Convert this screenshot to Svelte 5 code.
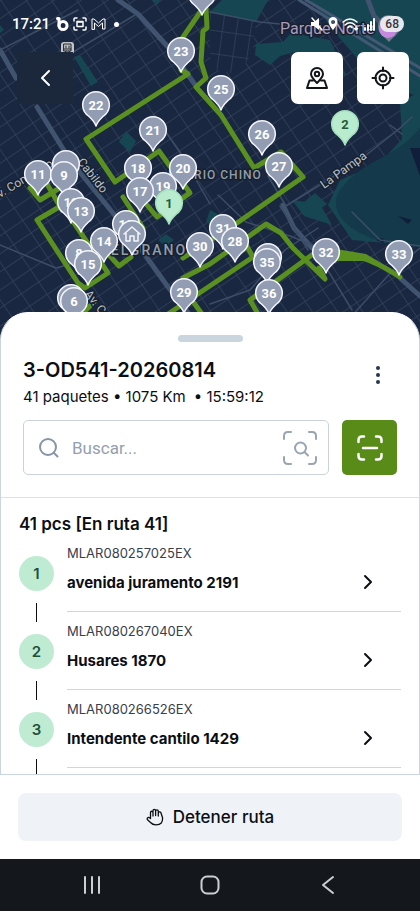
<script lang="ts">
	type Pin = { x: number; y: number; label?: string; done?: boolean; home?: boolean };

	const pins: Pin[] = [
		{ x: 202, y: -6 },
		{ x: 181, y: 51, label: '23' },
		{ x: 221, y: 89, label: '25' },
		{ x: 96, y: 105, label: '22' },
		{ x: 153, y: 130, label: '21' },
		{ x: 262, y: 134, label: '26' },
		{ x: 279, y: 166, label: '27' },
		{ x: 345, y: 124, label: '2', done: true },
		{ x: 66, y: 164 },
		{ x: 38, y: 174, label: '11' },
		{ x: 64, y: 175, label: '9' },
		{ x: 138, y: 168, label: '18' },
		{ x: 183, y: 168, label: '20' },
		{ x: 163, y: 186, label: '19' },
		{ x: 140, y: 191, label: '17' },
		{ x: 169, y: 203, label: '1', done: true },
		{ x: 71, y: 202, label: '12' },
		{ x: 81, y: 211, label: '13' },
		{ x: 79, y: 253, label: '8' },
		{ x: 104, y: 241, label: '14' },
		{ x: 88, y: 264, label: '15' },
		{ x: 126, y: 224, label: '10' },
		{ x: 132, y: 234, home: true },
		{ x: 71, y: 298 },
		{ x: 74, y: 301, label: '6' },
		{ x: 200, y: 246, label: '30' },
		{ x: 223, y: 228, label: '31' },
		{ x: 235, y: 241, label: '28' },
		{ x: 184, y: 292, label: '29' },
		{ x: 268, y: 257 },
		{ x: 267, y: 262, label: '35' },
		{ x: 326, y: 252, label: '32' },
		{ x: 399, y: 254, label: '33' },
		{ x: 269, y: 293, label: '36' }
	];

	const routes = [
		'M203 8 181 40V70L188 74 86 139 115 182 159 151 174 172',
		'M206 8 207 28 203 31 201 62 206 78 196 87 221 115 254 168 281 152 303 177 237 223 183 258',
		'M183 183 190 193 176 203M123 197 143 228M147 205 157 217 166 211',
		'M30 188 40 200 63 186M47 184 62 210M37 220 66 203M37 220 78 283 85 288 108 273 70 217M110 256 119 266 131 257',
		'M183 278 210 264 266 224 281 233 293 248 325 279 319 268',
		'M168 314 253 257 241 236M194 303 202 314M316 252 250 300 258 314M84 312 94 302'
	];

	const packages = [
		{ code: 'MLAR080257025EX', address: 'avenida juramento 2191' },
		{ code: 'MLAR080267040EX', address: 'Husares 1870' },
		{ code: 'MLAR080266526EX', address: 'Intendente cantilo 1429' }
	];

	let search = $state('');
</script>

<div class="app">
	<section class="map">
		<svg class="map-canvas" viewBox="0 0 420 340" preserveAspectRatio="xMidYMin slice" aria-hidden="true">
			<defs>
				<pattern id="streets" width="21" height="15" patternUnits="userSpaceOnUse" patternTransform="rotate(-34)">
					<path d="M0 0H21M0 0V15" />
				</pattern>
				<pattern id="streets-b" width="14" height="23" patternUnits="userSpaceOnUse" patternTransform="rotate(8)">
					<path d="M0 0H14M0 0V23" />
				</pattern>
				<path id="pin" d="M0 21C-1.500 16.500-4 14.500-7.500 11A13.300 13.300 0 1 1 7.500 11C4 14.500 1.500 16.500 0 21Z" />
			</defs>

			<rect width="420" height="340" fill="#1a2741" />
			<rect width="420" height="340" fill="url(#streets)" />
			<path d="M210 12 256 21 252 53 238 75 210 68Z" fill="#1a2741" />
			<path d="M210 12 256 21 252 53 238 75 210 68Z" fill="url(#streets-b)" />

			<g fill="#174653">
				<path d="M222 0H268L256 22 210 12Z" />
				<path d="M310 0H420V98L372 76 338 36Z" />
				<path d="M256 44 283 42 291 33 330 40 346 75 322 72 295 52 280 56 270 65 255 55Z" />
				<path d="M400 102 420 92V246L352 240 328 205 340 180 380 163 402 139Z" />
				<path d="M304 202 315 193 327 204 315 213ZM210 210 232 222 224 232 206 222Z" />
				<path d="M119 142 126 131 136 141 130 152ZM74 57 80 55 98 82 91 86ZM152 0H160L157 5ZM0 25 4 30 0 33Z" />
				<path d="M158 240 166 234 174 240 166 247ZM292 200 320 204 332 225 304 216Z" />
			</g>
			<path d="M420 128C394 160 364 158 340 190C326 210 347 243 420 247Z" fill="#14394a" />
			<path d="M410 148H420V176ZM398 216 412 220 408 224ZM376 240 383 238 384 243Z" fill="#101d3b" />

			<g class="avenue">
				<path d="M118 0 138 14 168 47 196 86M0 50 16 78M37 107 70 160 104 202 130 234 168 287 190 315M283 205 294 228 312 248M420 296 400 278M368 0 374 16 388 30" />
			</g>
			<g class="railway">
				<path d="M299 0 420 76M306 0 420 68" />
			</g>
			<g class="road">
				<path d="M0 50 78 10M48 67 135 15M0 245 56 268 88 259 190 190M210 12 260 22 300 26M268 176 286 206 360 160 400 128 412 117M390 125 402 134M218 195 246 222 290 236 330 252M352 212 380 240 420 246M350 318 393 270 420 248M210 304 250 290 285 250 318 228M318 254 352 310M154 115 180 152 210 204M280 206 308 250" />
			</g>

			<g class="route">
				{#each routes as d}
					<path {d} />
				{/each}
				<path d="M326 256C350 252 367 256 400 277" />
			</g>
			<path d="M336 249 366 254 398 273 366 261 336 261Z" fill="#5a9020" />

			<path d="M389 42C384 36 378 34 378 26A11 11 0 0 1 400 26C400 34 394 36 389 42Z" fill="#74798f" />
			<circle cx="388" cy="29" r="9" fill="#c58ae0" />
			<g class="map-label">
				<text x="280" y="34" class="park">Parque Norte</text>
				<text x="168" y="179" class="district">BARRIO CHINO</text>
				<text x="100" y="255" class="district large">BELGRANO</text>
				<text transform="translate(324 189) rotate(-36)">La Pampa</text>
				<text transform="translate(0 198) rotate(-31)">v. Congreso</text>
				<text transform="translate(77 162) rotate(52)">Cabildo</text>
				<text transform="translate(84 294) rotate(52)">Av. Cabildo</text>
			</g>
			<rect x="61" y="42" width="13" height="12" rx="3" fill="#c3c5c8" />
			<path d="M64 44H71V51H64ZM66 46V48M69 46V48M64 49H71M65 53 66 51M70 53 69 51" class="station" />

			{#each pins as pin}
				<g class="pin" class:done={pin.done} transform="translate({pin.x} {pin.y})">
					<use href="#pin" />
					{#if pin.home}
						<path class="house" d="M-8 0 0-7 8 0M-6-1V7H-2V2H2V7H6V-1" />
					{:else if pin.label}
						<text text-anchor="middle" y="5">{pin.label}</text>
					{/if}
				</g>
			{/each}
		</svg>

		<div class="status">
			<div class="status-group">
				<span class="time">17:21</span>
				<svg width="13" height="14" viewBox="0 0 13 14" class="line bold"><path d="M1.500 1.500H3V9" /><circle cx="7" cy="8.500" r="4" /></svg>
				<svg width="14" height="14" viewBox="0 0 14 14" class="line"><path d="M1 4V2Q1 1 2 1H4M10 1H12Q13 1 13 2V4M13 10V12Q13 13 12 13H10M4 13H2Q1 13 1 12V10" /><rect x="4" y="4.500" width="6" height="5" /><path d="M5 5H9" /></svg>
				<svg width="15" height="12" viewBox="0 0 15 12" class="gmail"><path d="M1 11V1H3L7.500 5 12 1H14V11H11.500V5L7.500 8.500 3.500 5V11Z" /></svg>
				<i class="more"></i>
			</div>
			<div class="status-group right">
				<svg width="14" height="14" viewBox="0 0 14 14"><path d="M1 5H4L9 1V13L4 9H1Z" fill="#fff" /><path d="M2 1 12 13" class="line" /></svg>
				<svg width="10" height="14" viewBox="0 0 10 14"><path fill="#fff" fill-rule="evenodd" d="M5 0A4.500 4.500 0 0 1 9.500 4.500C9.500 8 5 13 5 13S.5 8 .5 4.500A4.500 4.500 0 0 1 5 0ZM5 3A2 2 0 1 0 5 7 2 2 0 0 0 5 3Z" /></svg>
				<svg width="17" height="14" viewBox="0 0 17 14" class="line"><path d="M1 5Q8 -1 15 5M3 8Q8 3.500 13 8M6 10.500Q8 8.500 10 10.500" /><path d="M14 9V13M12.500 11.500 14 13 15.500 11.500" /></svg>
				<svg width="13" height="13" viewBox="0 0 13 13" class="signal"><path d="M2 10V12M5 7V12M8 4V12M11 1V12" /></svg>
				<span class="battery">68</span>
			</div>
		</div>

		<div class="controls">
			<button class="back" aria-label="Volver">
				<svg width="20" height="20" viewBox="0 0 20 20"><path d="M14 3 7 10 14 17" /></svg>
			</button>
			<button class="tool" aria-label="Ver mapa">
				<svg width="24" height="24" viewBox="0 0 24 24"><path d="M12 17C8.500 13.500 6 11 6 8A6 6 0 0 1 18 8C18 11 15.500 13.500 12 17Z" /><circle cx="12" cy="8" r="2.200" /><path d="M8 14.500H4.500L2 22H22L19.500 14.500H16" /></svg>
			</button>
			<button class="tool" aria-label="Mi ubicación">
				<svg width="24" height="24" viewBox="0 0 24 24"><circle cx="12" cy="12" r="7.500" /><circle cx="12" cy="12" r="3.500" /><path d="M12 1.500V5M12 19V22.500M1.500 12H5M19 12H22.500" /></svg>
			</button>
		</div>
	</section>

	<main class="sheet">
		<div class="handle"></div>
		<header class="summary">
			<div>
				<h1>3-OD541-20260814</h1>
				<p><span>41 paquetes • 1075 Km</span><span>• 15:59:12</span></p>
			</div>
			<button class="menu" aria-label="Más opciones"><i></i><i></i><i></i></button>
		</header>

		<div class="search-row">
			<label class="search">
				<svg width="20" height="20" viewBox="0 0 20 20"><circle cx="9" cy="9" r="8" /><path d="M15 15 18.500 18.500" /></svg>
				<input type="text" placeholder="Buscar..." aria-label="Buscar" bind:value={search} />
				<svg width="34" height="34" viewBox="0 0 34 34" class="scan-search"><path d="M1 8V5Q1 1 5 1H8M26 1H29Q33 1 33 5V8M33 26V29Q33 33 29 33H26M8 33H5Q1 33 1 29V26" /><circle cx="17.500" cy="17" r="5.500" /><path d="M21.500 21 25 24.500" /></svg>
			</label>
			<button class="scan" aria-label="Escanear">
				<svg width="26" height="26" viewBox="0 0 26 26"><path d="M1.500 7V5Q1.500 1.500 5 1.500H7M19 1.500H21Q24.500 1.500 24.500 5V7M24.500 19V21Q24.500 24.500 21 24.500H19M7 24.500H5Q1.500 24.500 1.500 21V19M6 13H20" /></svg>
			</button>
		</div>

		<section class="list">
			<h2>41 pcs [En ruta 41]</h2>
			<ol>
				{#each packages as item, i}
					<li>
						<div class="step">
							<span class="number">{i + 1}</span>
							<i class="link"></i>
						</div>
						<div class="package">
							<span class="code">{item.code}</span>
							<button class="address">
								<span>{item.address}</span>
								<svg width="10" height="16" viewBox="0 0 10 16"><path d="M2 2 8 8 2 14" /></svg>
							</button>
						</div>
					</li>
				{/each}
			</ol>
		</section>
	</main>

	<footer>
		<button class="stop">
			<svg width="18" height="18" viewBox="0 0 18 18"><path d="M4.500 10.500V4.500A1.200 1.200 0 0 1 7 4.500V8M7 4V2.700A1.300 1.300 0 0 1 9.600 2.700V7.500M9.600 3.200A1.300 1.300 0 0 1 12.300 3.200V8M12.300 5.500A1.300 1.300 0 0 1 15 5L16.500 9.500Q17.300 16.800 10 16.800Q6.500 16.800 4.500 14.500L1.300 11.500Q.8 10 2 9.500Q3 9.300 4.500 10.500" /></svg>
			Detener ruta
		</button>
	</footer>

	<nav>
		<button aria-label="Recientes"><svg width="20" height="20" viewBox="0 0 20 20"><path d="M3 2V18M10 2V18M17 2V18" /></svg></button>
		<button aria-label="Inicio"><svg width="20" height="20" viewBox="0 0 20 20"><rect x="1.500" y="1.500" width="17" height="17" rx="5.500" /></svg></button>
		<button aria-label="Atrás"><svg width="20" height="20" viewBox="0 0 20 20"><path d="M15 2 5 10 15 18" /></svg></button>
	</nav>
</div>

<style>
	:global(body) {
		margin: 0;
	}

	.app {
		height: 100vh;
		display: flex;
		flex-direction: column;
		background: #fff;
		color: #0b0f14;
		font-family: Inter, 'Liberation Sans', sans-serif;
	}

	h1,
	h2,
	p,
	ol {
		margin: 0;
		padding: 0;
	}

	button {
		border: 0;
		padding: 0;
		background: none;
		color: inherit;
		font: inherit;
		cursor: pointer;
	}

	svg {
		flex: none;
		display: block;
		fill: none;
		stroke-linecap: round;
		stroke-linejoin: round;
	}

	/* map */
	.map {
		position: relative;
		flex: none;
		height: 340px;
		overflow: hidden;
	}

	.map-canvas {
		position: absolute;
		inset: 0;
		width: 100%;
		height: 100%;
	}

	pattern path {
		stroke: #33425c;
		stroke-width: 1.5;
	}

	.avenue {
		stroke: #40536f;
		stroke-width: 5;
	}

	.railway {
		stroke: #445873;
		stroke-width: 3;
	}

	.road {
		stroke: #3c4d67;
		stroke-width: 1.5;
	}

	.route {
		stroke: #5a9020;
		stroke-width: 5;
	}

	.map-label {
		fill: #b9c0ca;
		stroke: #16202f;
		stroke-width: 3;
		paint-order: stroke;
		font: 12px Roboto, sans-serif;
	}

	.park {
		fill: #a99bbd;
		font-size: 16px;
	}

	.district {
		fill: #929dac;
		font-weight: 500;
		letter-spacing: 1px;
	}

	.large {
		font-size: 14px;
		letter-spacing: 2px;
	}

	.station {
		stroke: #20252c;
	}

	.pin {
		fill: #929db4;
		stroke: #f4f6fa;
		stroke-width: 1.5;
	}

	.pin text {
		fill: #fff;
		stroke: none;
		font: 700 13px Roboto, sans-serif;
	}

	.pin.done {
		fill: #b9ecce;
		stroke: #a4dfbd;
	}

	.pin.done text {
		fill: #225a38;
	}

	.pin .house {
		fill: none;
	}

	.status {
		position: relative;
		display: flex;
		justify-content: space-between;
		padding: 14px 16px 0 12px;
		color: #fff;
	}

	.status-group {
		display: flex;
		align-items: center;
		gap: 4px;
		height: 20px;
	}

	.time {
		margin-right: 2px;
		font: 500 15px Roboto, sans-serif;
	}

	.line,
	.gmail {
		stroke: #fff;
		stroke-width: 1.5;
	}

	.gmail {
		stroke-width: 1;
	}

	.bold {
		stroke-width: 3;
	}

	.signal {
		stroke: #fff;
		stroke-width: 2;
	}

	.more {
		width: 5px;
		height: 5px;
		margin-left: 4px;
		border-radius: 50%;
		background: #fff;
	}

	.battery {
		padding: 0 5px;
		border-radius: 8px;
		background: #e8e7ee;
		color: #343840;
		font: 500 12px/16px Roboto, sans-serif;
	}

	.controls {
		position: relative;
		display: flex;
		gap: 14px;
		padding: 18px 11px 0 17px;
	}

	.controls button {
		display: grid;
		place-items: center;
		height: 52px;
	}

	.back {
		width: 56px;
		margin-right: auto;
		background: #1b273a;
		stroke: #fff;
		stroke-width: 2;
	}

	.tool {
		width: 52px;
		border-radius: 7px;
		background: #fff;
		stroke: #11151a;
		stroke-width: 2;
	}

	/* sheet */
	.sheet {
		position: relative;
		flex: 1;
		min-height: 0;
		display: flex;
		flex-direction: column;
		margin-top: -28px;
		border: 1px solid #cbd5df;
		border-top-color: #fff;
		border-radius: 28px 28px 0 0;
		background: #fff;
		overflow: hidden;
	}

	.handle {
		flex: none;
		width: 65px;
		height: 7px;
		margin: 22px auto 0;
		border-radius: 4px;
		background: #cbd5df;
	}

	.summary {
		display: flex;
		justify-content: space-between;
		align-items: center;
		padding: 15px 30px 0 22px;
	}

	h1 {
		font-size: 20px;
		font-weight: 600;
		line-height: 26px;
	}

	.summary p {
		display: flex;
		gap: 8px;
		font-size: 15px;
		line-height: 28px;
	}

	.menu {
		display: flex;
		flex-direction: column;
		align-items: center;
		gap: 3px;
		width: 22px;
		margin-bottom: 18px;
	}

	.menu i {
		width: 4px;
		height: 4px;
		border-radius: 50%;
		background: #263650;
	}

	.search-row {
		display: flex;
		gap: 13px;
		padding: 9px 22px 22px;
		border-bottom: 1px solid #dce1e7;
	}

	.search {
		flex: 1;
		min-width: 0;
		box-sizing: border-box;
		height: 55px;
		display: flex;
		align-items: center;
		gap: 13px;
		padding: 0 11px 0 15px;
		border: 1px solid #cbd2d9;
		border-radius: 5px;
		stroke: #8795a5;
		stroke-width: 2;
	}

	.scan-search {
		stroke: #99a5b2;
	}

	.search input {
		flex: 1;
		min-width: 0;
		padding: 0;
		border: 0;
		outline: 0;
		background: none;
		color: #0b0f14;
		font: 17px Roboto, sans-serif;
	}

	.search input::placeholder {
		color: #94a0ae;
	}

	.scan {
		width: 55px;
		height: 55px;
		display: grid;
		place-items: center;
		border-radius: 5px;
		background: #588b17;
		stroke: #fff;
		stroke-width: 2.5;
	}

	.list {
		flex: 1;
		min-height: 0;
		overflow: hidden;
		padding: 14px 18px 0;
	}

	h2 {
		font-size: 17px;
		font-weight: 600;
		line-height: 24px;
	}

	ol {
		list-style: none;
		padding-top: 8px;
	}

	li {
		display: flex;
		gap: 13px;
		height: 78px;
	}

	.step {
		display: flex;
		flex-direction: column;
		align-items: center;
		gap: 12px;
		padding-top: 12px;
	}

	.number {
		width: 35px;
		border-radius: 50%;
		background: #bfebd2;
		color: #225039;
		font-size: 15px;
		font-weight: 600;
		line-height: 35px;
		text-align: center;
	}

	.link {
		width: 1px;
		height: 19px;
		background: #0b0f14;
	}

	.package {
		flex: 1;
		display: flex;
		flex-direction: column;
		box-sizing: border-box;
		height: 68px;
		border-bottom: 1px solid #d2d6da;
	}

	.code {
		color: #38404b;
		font-size: 13px;
		line-height: 18px;
	}

	.address {
		display: flex;
		align-items: center;
		justify-content: space-between;
		height: 40px;
		padding-right: 28px;
		font-size: 15px;
		font-weight: 700;
		stroke: #0b0f14;
		stroke-width: 2;
	}

	.address span {
		stroke: none;
	}

	footer {
		flex: none;
		padding: 18px;
	}

	.stop {
		width: 100%;
		height: 48px;
		display: flex;
		align-items: center;
		justify-content: center;
		gap: 9px;
		border-radius: 8px;
		background: #eff3f8;
		font-size: 17px;
		font-weight: 500;
	}

	.stop svg {
		stroke: #0b0f14;
		stroke-width: 1.3;
	}

	nav {
		flex: none;
		display: flex;
		justify-content: center;
		height: 52px;
		background: #14181c;
		stroke: #cdd0d3;
		stroke-width: 2;
	}

	nav button {
		display: grid;
		place-items: center;
		width: 28%;
	}
</style>
